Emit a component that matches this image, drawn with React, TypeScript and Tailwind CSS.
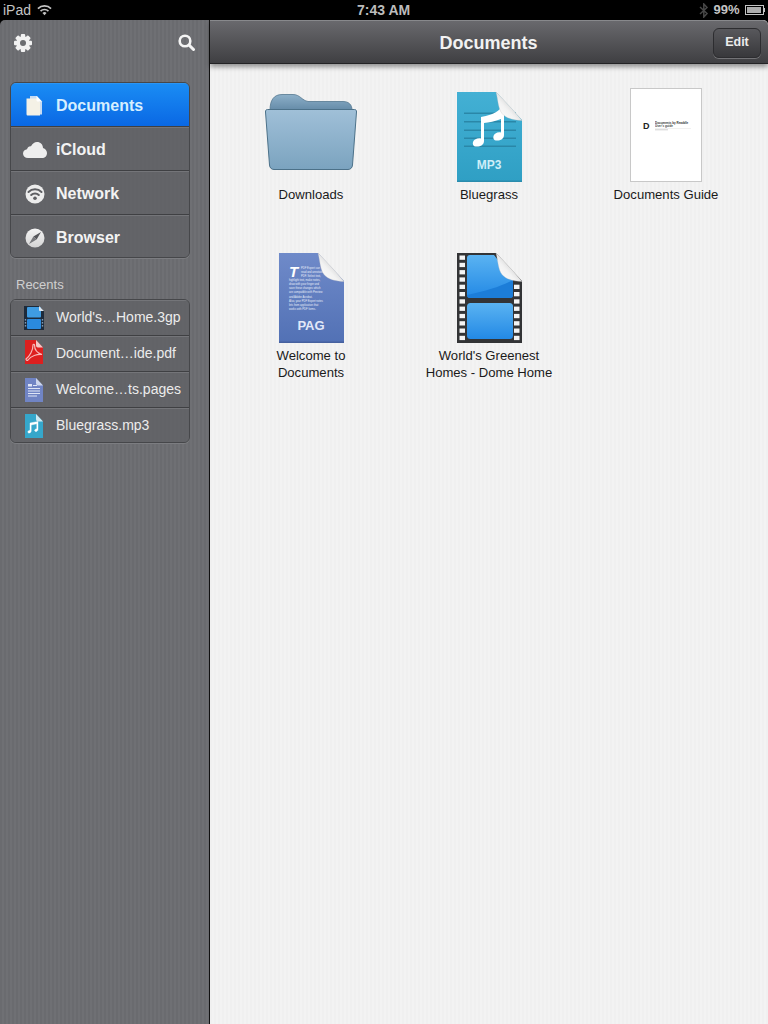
import React from "react";

const sans = "font-['Liberation_Sans',Arial,sans-serif]";
const svgFont = "Liberation Sans, Arial, sans-serif";

function Curl({ x, y }: { x: number; y: number }) {
  return (
    <path
      transform={`translate(${x} ${y})`}
      d="M0 0 C9 9 18 19 26 28.5 C19 28.5 10 26.5 6 21.5 C2 16.5 2 7 0 0Z"
      fill="url(#curlG)"
      stroke="#bdbdbd"
      strokeWidth="0.3"
    />
  );
}

function Defs() {
  return (
    <svg width="0" height="0" className="absolute">
      <defs>
        <linearGradient id="curlG" x1="1" y1="0" x2="0" y2="1">
          <stop offset="0.25" stopColor="#c6c6c6" />
          <stop offset="0.6" stopColor="#f2f2f2" />
          <stop offset="1" stopColor="#ffffff" />
        </linearGradient>
      </defs>
    </svg>
  );
}

function FolderIcon() {
  return (
    <svg width="92" height="76" viewBox="0 0 92 76">
      <defs>
        <linearGradient id="fb" x1="0" y1="0" x2="0" y2="1">
          <stop offset="0" stopColor="#8db0c9" />
          <stop offset="1" stopColor="#658ba8" />
        </linearGradient>
        <linearGradient id="ff" x1="0" y1="0" x2="0" y2="1">
          <stop offset="0" stopColor="#a0c0d8" />
          <stop offset="1" stopColor="#7ba3bf" />
        </linearGradient>
      </defs>
      <path d="M5 16 C5 6 9 0.5 17 0.5 L28 0.5 C35 0.5 37 6.5 43 7.5 L78 7.5 C84 7.5 87 11 87 16Z" fill="url(#fb)" stroke="#54778f" strokeWidth="0.8" />
      <path d="M2.5 15.5 L89.5 15.5 C91 15.5 91.6 16.5 91.5 18 L87.5 71 C87.3 73.8 85.5 75.5 83 75.5 L9 75.5 C6.5 75.5 4.7 73.8 4.5 71 L0.5 18 C0.4 16.5 1 15.5 2.5 15.5Z" fill="url(#ff)" stroke="#4c7189" strokeWidth="1" />
    </svg>
  );
}

function Mp3Icon() {
  return (
    <svg width="65" height="90" viewBox="0 0 65 90">
      <defs>
        <linearGradient id="mp" x1="0" y1="0" x2="0" y2="1">
          <stop offset="0" stopColor="#43b0d4" />
          <stop offset="1" stopColor="#2f9fc4" />
        </linearGradient>
      </defs>
      <path d="M0 0 H39 L65 28 V90 H0Z" fill="url(#mp)" />
      <rect y="88.5" width="65" height="1.5" fill="#2a8cad" />
      <g fill="#2a87a8">
        <rect x="7" y="20.5" width="52" height="1.5" />
        <rect x="7" y="29" width="52" height="1.5" />
        <rect x="7" y="37.5" width="52" height="1.5" />
        <rect x="7" y="45.5" width="52" height="1.5" />
        <rect x="7" y="53.5" width="52" height="1.5" />
      </g>
      <path d="M24 25 C30 24 38 22 43 17 L47 17 V43 C47 47 43 49 39 48.5 C35.5 48 35.5 43.5 38.5 41.5 C40 40.5 42 40 44 40.5 V27 C38 29.5 32 30.5 27 31 V49 C27 53 23 55 18.5 54.5 C15 54 15 49.5 18 47.5 C20 46.5 22 46 24 46.5Z" fill="#fff" />
      <Curl x={39} y={0} />
      <text x="32" y="77" textAnchor="middle" fontSize="12" fontWeight="700" fill="#cdeef8" fontFamily={svgFont}>MP3</text>
    </svg>
  );
}

function PagIcon() {
  const lines = [
    "PDF Expert can",
    "read and annotate",
    "PDF. Select text,",
    "highlight text, make notes,",
    "draw with your finger and",
    "save these changes which",
    "are compatible with Preview",
    "and Adobe Acrobat.",
    "Also, your PDF Expert notes",
    "lets from application that",
    "works with PDF forms.",
  ];
  return (
    <svg width="65" height="90" viewBox="0 0 65 90">
      <defs>
        <linearGradient id="pg" x1="0" y1="0" x2="0" y2="1">
          <stop offset="0" stopColor="#6f8ac9" />
          <stop offset="1" stopColor="#5271b5" />
        </linearGradient>
      </defs>
      <path d="M0 0 H39 L65 28 V90 H0Z" fill="url(#pg)" />
      <rect y="88.5" width="65" height="1.5" fill="#46619f" />
      <text x="10" y="24" fontSize="15" fontWeight="700" fontStyle="italic" fill="#fff" fontFamily={svgFont}>T</text>
      {lines.map((l, i) => (
        <text key={i} x={i < 3 ? 22 : 10} y={15.5 + i * 4.15} fontSize="2.7" fill="#e8edf9" fontFamily={svgFont}>{l}</text>
      ))}
      <Curl x={39} y={0} />
      <text x="32" y="77" textAnchor="middle" fontSize="13" fontWeight="700" fill="#e2e8f8" fontFamily={svgFont}>PAG</text>
    </svg>
  );
}

function FilmIcon() {
  const ys = Array.from({ length: 12 }, (_, i) => 2.5 + i * 7.3);
  return (
    <svg width="65" height="90" viewBox="0 0 65 90">
      <defs>
        <linearGradient id="fa" x1="0" y1="0" x2="0" y2="1">
          <stop offset="0" stopColor="#5ab3f2" />
          <stop offset="1" stopColor="#2389e5" />
        </linearGradient>
      </defs>
      <path d="M0 0 H39 L65 28 V90 H0Z" fill="#333436" />
      {ys.map((y) => (
        <rect key={y} x="2.5" y={y} width="5.5" height="4.3" fill="#f4f4f4" />
      ))}
      {ys.filter((y) => y > 28).map((y) => (
        <rect key={y} x="57" y={y} width="5.5" height="4.3" fill="#f4f4f4" />
      ))}
      <path d="M13 2 C11 2 10 3 10 5 V42 C10 44 11 45 13 45 H53 C55 45 56 44 56 42 V26 L37 2Z" fill="url(#fa)" />
      <path d="M10 42 C30 38 45 33 56 27 V42 C56 44 55 45 53 45 H13 C11 45 10 44 10 42Z" fill="#1c7dd8" />
      <rect x="10" y="50" width="46" height="36" rx="3.5" fill="url(#fa)" />
      <Curl x={39} y={0} />
    </svg>
  );
}

function GuideIcon() {
  return (
    <div className="flex h-[94px] w-[72px] items-center gap-[5px] border border-[#c8c8c8] bg-white pb-[18px] pl-[12px]">
      <span className={`${sans} text-[9px] font-bold leading-none text-[#222]`}>D</span>
      <svg width="42" height="12" viewBox="0 0 42 12">
        <text x="0" y="3.5" fontSize="3" fontWeight="700" fill="#333" fontFamily={svgFont}>Documents by Readdle</text>
        <text x="0" y="7" fontSize="3" fontWeight="700" fill="#444" fontFamily={svgFont}>User's guide</text>
        <rect x="0" y="8" width="36" height="0.5" fill="#e2e2e2" />
        <rect x="0" y="9.5" width="13" height="0.7" fill="#bbb" />
      </svg>
    </div>
  );
}

function SmallDoc({ fill, fold, children }: { fill: string; fold: string; children?: React.ReactNode }) {
  return (
    <svg width="18" height="24" viewBox="0 0 18 24">
      <path d="M0 0 H11 L18 7.5 V24 H0Z" fill={fill} />
      <path d="M11 0 L18 7.5 H13 C11.5 7.5 11 6.5 11 5Z" fill={fold} />
      {children}
    </svg>
  );
}

function DocsNavIcon() {
  return (
    <svg width="17" height="20" viewBox="0 0 17 20">
      <path d="M4 0 H11 L16 5.5 V18.5 H4Z" fill="#c8dcf2" />
      <path d="M0.5 2.5 H10.5 L14 6 V19.5 H2 C1 19.5 .5 19 .5 18Z" fill="#f4f1e6" />
      <path d="M10.5 0 L16 5.5 H12 C11 5.5 10.5 5 10.5 4Z" fill="#fff" />
    </svg>
  );
}

function CloudIcon() {
  return (
    <svg width="24" height="16" viewBox="0 0 24 16">
      <path d="M5 16 C2 16 0 14 0 11.5 C0 9 2 7.5 4 7.3 C4.6 4.8 6.5 4 8 4.3 C9.3 1.6 11.5 0 14 0 C17.5 0 20 2.6 20 6 C22.5 6.8 24 8.8 24 11 C24 14 22 16 19 16Z" fill="#eeeeee" />
    </svg>
  );
}

function WifiCircle() {
  return (
    <svg width="20" height="20" viewBox="0 0 20 20">
      <circle cx="10" cy="10" r="9.5" fill="#ececec" />
      <path d="M3.5 8 A9.2 9.2 0 0 1 16.5 8" fill="none" stroke="#5e5f63" strokeWidth="2" strokeLinecap="round" />
      <path d="M6.2 11 A5.3 5.3 0 0 1 13.8 11" fill="none" stroke="#5e5f63" strokeWidth="2" strokeLinecap="round" />
      <circle cx="10" cy="14.3" r="1.8" fill="#5e5f63" />
    </svg>
  );
}

function CompassIcon() {
  return (
    <svg width="20" height="20" viewBox="0 0 20 20">
      <defs>
        <linearGradient id="cmp" x1="0" y1="0" x2="0" y2="1">
          <stop offset="0" stopColor="#f4f4f4" />
          <stop offset="1" stopColor="#d4d4d4" />
        </linearGradient>
      </defs>
      <circle cx="10" cy="10" r="9.5" fill="url(#cmp)" />
      <path d="M16 4 L11.6 11.6 L8.4 8.4Z" fill="#55565a" />
      <path d="M4 16 L8.4 8.4 L11.6 11.6Z" fill="#77787c" />
    </svg>
  );
}

function Gear() {
  const teeth = [0, 45, 90, 135];
  return (
    <svg width="18" height="18" viewBox="0 0 18 18">
      {teeth.map((a) => (
        <rect key={a} x="6.8" y="0" width="4.4" height="18" rx="1" fill="#f2f2f2" transform={`rotate(${a} 9 9)`} />
      ))}
      <circle cx="9" cy="9" r="6.8" fill="#f2f2f2" />
      <circle cx="9" cy="9" r="3" fill="#6c6d71" />
    </svg>
  );
}

function SearchIcon() {
  return (
    <svg width="17" height="17" viewBox="0 0 17 17">
      <circle cx="7" cy="7" r="5.3" fill="none" stroke="#f4f4f4" strokeWidth="2.6" />
      <path d="M11 11 L15.5 15.5" stroke="#f4f4f4" strokeWidth="3" strokeLinecap="round" />
    </svg>
  );
}

function NavRow({ icon, label, active, last }: { icon: React.ReactNode; label: string; active?: boolean; last?: boolean }) {
  return (
    <div
      className={`flex items-center border-t pt-[2px] ${last ? "h-[42px]" : "h-[44px] border-b border-b-[#3f4043]"} ${
        active
          ? "border-t-[#2a96f6] bg-[linear-gradient(#1a8cf4,#0a68e4)] text-[#d6efff]"
          : "border-t-[#747579] bg-[#606165]/80 text-[#f3f3f3]"
      }`}
    >
      <div className="flex w-[45px] shrink-0 justify-center pl-[2px]">{icon}</div>
      <span className="text-[16px] font-bold">{label}</span>
    </div>
  );
}

function RecentRow({ icon, label, last }: { icon: React.ReactNode; label: string; last?: boolean }) {
  return (
    <div className={`flex items-center border-t border-t-[#747579] bg-[#606165]/80 ${last ? "h-[34px]" : "h-[36px] border-b border-b-[#3f4043]"}`}>
      <div className="flex w-[45px] shrink-0 justify-center">{icon}</div>
      <span className="mb-[1px] whitespace-nowrap text-[14px] text-[#ececec]">{label}</span>
    </div>
  );
}

function Item({ icon, label, tall }: { icon: React.ReactNode; label: React.ReactNode; tall?: boolean }) {
  return (
    <div className="flex flex-col items-center">
      <div className={`flex w-full items-end justify-center ${tall ? "h-[94px]" : "h-[90px]"}`}>{icon}</div>
      <div className="mt-[4px] text-center text-[13.1px] leading-[17px] text-[#1a1a1a]">{label}</div>
    </div>
  );
}

export default function App() {
  return (
    <div className={`${sans} flex h-[1024px] w-[768px] flex-col overflow-hidden bg-black`}>
      <Defs />
      <div className="relative flex h-[20px] shrink-0 items-center justify-between bg-black pr-[3px] pl-[3px] text-[14px] text-[#c4c4c4]">
        <div className="flex items-center gap-[6px]">
          <span>iPad</span>
          <svg width="15" height="12" viewBox="0 0 16 12">
            <path d="M1 4.5 A10 10 0 0 1 15 4.5" fill="none" stroke="#c4c4c4" strokeWidth="1.8" />
            <path d="M3.8 7.2 A6 6 0 0 1 12.2 7.2" fill="none" stroke="#c4c4c4" strokeWidth="1.8" />
            <path d="M8 11.5 L5.8 9.3 A3 3 0 0 1 10.2 9.3Z" fill="#c4c4c4" />
          </svg>
        </div>
        <span className="absolute left-[357px] font-bold text-[#bcbcbc]">7:43 AM</span>
        <div className="flex items-center gap-[4px] text-[13px]">
          <svg width="10" height="15" viewBox="0 0 10 15">
            <path d="M1 4 L8 10.5 L4.8 14 V1 L8 4.5 L1 11" fill="none" stroke="#484848" strokeWidth="1.5" />
          </svg>
          <span className="font-bold">99%</span>
          <div className="ml-[1px] flex items-center">
            <div className="flex h-[10px] w-[19px] items-stretch border border-[#c4c4c4] p-[1px] pr-[2px]">
              <div className="flex-1 bg-[#aeaeae]" />
            </div>
            <div className="h-[4px] w-[1.5px] bg-[#c4c4c4]" />
          </div>
        </div>
      </div>

      <div className="flex min-h-0 flex-1">
        <aside className="flex w-[209px] shrink-0 flex-col rounded-tl-[5px] bg-[repeating-linear-gradient(90deg,#6a6b6f_0px,#6a6b6f_2px,#6f7074_2px,#6f7074_4px)]">
          <div className="flex h-[44px] shrink-0 items-center justify-between px-[14px] pt-[1px]">
            <Gear />
            <SearchIcon />
          </div>
          <div className="mt-[18px] ml-[10px] w-[180px] overflow-hidden rounded-[6px] border border-[#46474a] shadow-[0_1px_0_#7c7d81]">
            <NavRow active icon={<DocsNavIcon />} label="Documents" />
            <NavRow icon={<CloudIcon />} label="iCloud" />
            <NavRow icon={<WifiCircle />} label="Network" />
            <NavRow icon={<CompassIcon />} label="Browser" last />
          </div>
          <div className="mt-[19px] pl-[16px] text-[13px] leading-[15px] text-[#cfcfcf]">Recents</div>
          <div className="mt-[7px] ml-[10px] w-[180px] overflow-hidden rounded-[6px] border border-[#46474a] shadow-[0_1px_0_#7c7d81]">
            <RecentRow
              label="World's…Home.3gp"
              icon={
                <svg width="20" height="24" viewBox="0 0 20 24">
                  <path d="M0 0 H15 L20 5 V24 H0Z" fill="#1d2a3a" />
                  <rect x="3" y="1" width="14" height="10.5" rx="1" fill="#3f9ce2" />
                  <rect x="3" y="13" width="14" height="10" rx="1" fill="#2a8ade" />
                  <g fill="#7f9ab5">
                    <rect x="0.8" y="13" width="1.4" height="1.6" />
                    <rect x="0.8" y="16" width="1.4" height="1.6" />
                    <rect x="0.8" y="19" width="1.4" height="1.6" />
                    <rect x="17.8" y="13" width="1.4" height="1.6" />
                    <rect x="17.8" y="16" width="1.4" height="1.6" />
                    <rect x="17.8" y="19" width="1.4" height="1.6" />
                  </g>
                  <path d="M15 0 L20 5 H16 C15.5 5 15 4.5 15 4Z" fill="#dfe6ee" />
                </svg>
              }
            />
            <RecentRow
              label="Document…ide.pdf"
              icon={
                <div className="mb-[4px]">
                  <SmallDoc fill="#dd1f1f" fold="#f2c8c8">
                    <path d="M1 19 C5 16 8 10 8 5 C8 4 9.5 4 9.5 5 C9.5 9 12 13 17 14.5 C12 14 6 16 3 20 C2 21 1 20 1 19Z" fill="none" stroke="#f6b8b8" strokeWidth="1.2" />
                  </SmallDoc>
                </div>
              }
            />
            <RecentRow
              label="Welcome…ts.pages"
              icon={
                <SmallDoc fill="#7084c4" fold="#cdd6ee">
                  <g fill="#dfe5f6">
                    <rect x="3" y="6" width="4" height="2.5" />
                    <rect x="8" y="7" width="4" height="1" />
                    <rect x="3" y="10" width="12" height="1" />
                    <rect x="3" y="12.5" width="12" height="1" />
                    <rect x="3" y="15" width="12" height="1" />
                    <rect x="3" y="17.5" width="9" height="1" />
                  </g>
                </SmallDoc>
              }
            />
            <RecentRow
              label="Bluegrass.mp3"
              last
              icon={
                <SmallDoc fill="#35a7cb" fold="#cdeaf3">
                  <path d="M5 9 L13 7.5 V15.5 C13 17 11.5 17.8 10.3 17.5 C9 17 9.5 15 11.8 14.8 V9.8 L6.2 11 V17 C6.2 18.5 4.8 19.3 3.5 19 C2.2 18.5 2.7 16.5 5 16.3Z" fill="#fff" stroke="#fff" strokeWidth="0.4" />
                </SmallDoc>
              }
            />
          </div>
        </aside>
        <div className="w-px shrink-0 bg-[#111]" />
        <main className="flex min-w-0 flex-1 flex-col rounded-tr-[5px] bg-[repeating-linear-gradient(90deg,#f0f0f0_0px,#f0f0f0_2px,#f3f3f3_2px,#f3f3f3_4px)]">
          <header className="flex h-[44px] shrink-0 items-center justify-between rounded-tr-[5px] border-t border-b border-t-[#88898c] border-b-[#232325] bg-[linear-gradient(#69696d,#3f3f42)] pr-[7px] shadow-[0_3px_5px_rgba(0,0,0,0.4)]">
            <div className="w-[54px]" />
            <h1 className="pt-[3px] text-[18px] font-bold text-[#f2f2f2]">Documents</h1>
            <div className="mt-[1px] flex h-[30px] w-[48px] items-center justify-center rounded-[6px] border border-[#2d2d30] bg-[linear-gradient(#58585c,#38383b)] text-[12.5px] font-bold text-[#ececec] shadow-[0_1px_0_#737376]">
              Edit
            </div>
          </header>
          <div className="grid grid-cols-[178px_178px_176px] pt-[24px] pl-[12px]">
            <div>
              <Item tall icon={<div className="pb-[12px]"><FolderIcon /></div>} label="Downloads" />
            </div>
            <div>
              <Item tall icon={<Mp3Icon />} label="Bluegrass" />
            </div>
            <div>
              <Item tall icon={<GuideIcon />} label="Documents Guide" />
            </div>
            <div className="mt-[50px]">
              <Item icon={<PagIcon />} label={<>Welcome to<br />Documents</>} />
            </div>
            <div className="mt-[50px]">
              <Item icon={<FilmIcon />} label={<>World's Greenest<br />Homes - Dome Home</>} />
            </div>
          </div>
        </main>
      </div>
    </div>
  );
}
